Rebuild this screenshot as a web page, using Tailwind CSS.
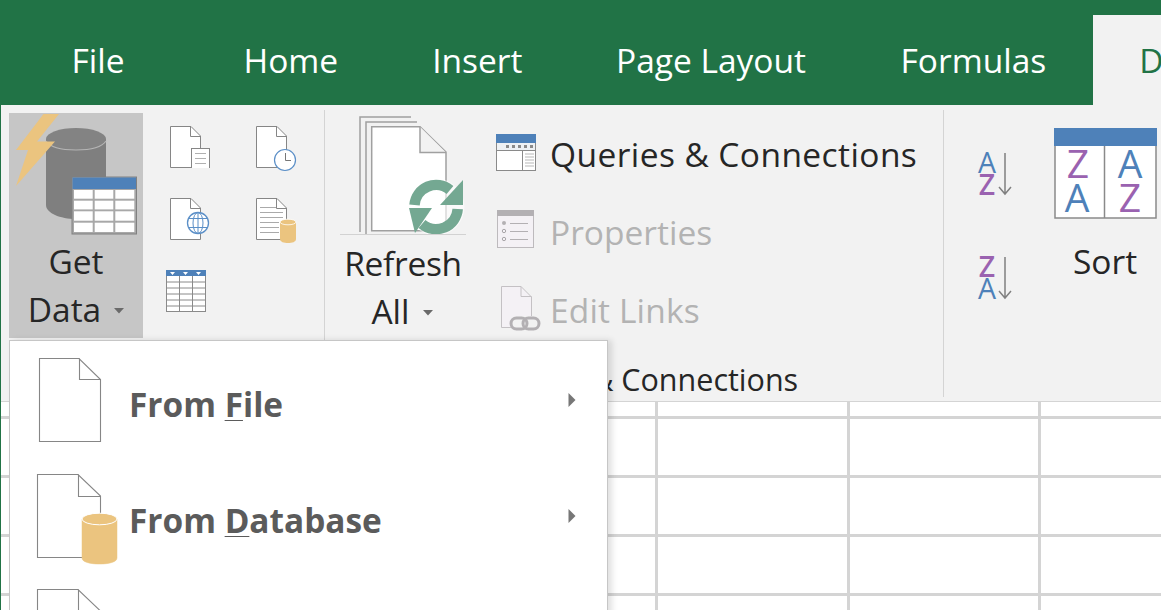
<!doctype html>
<html>
<head>
<meta charset="utf-8">
<script src="https://cdn.jsdelivr.net/npm/@tailwindcss/browser@4"></script>
</head>
<body class="m-0 bg-white">
<div class="relative h-[610px] w-[1161px] overflow-hidden border-l border-l-[#217346] bg-white font-['Open_Sans','Noto_Sans',sans-serif] text-[#262626]">

  <!-- tabs -->
  <div class="flex h-[105px] items-stretch whitespace-nowrap bg-[#217346] pt-[15px] text-[33.5px] text-white">
    <div class="flex w-[195.5px] shrink-0 items-center pl-[70.5px]">File</div>
    <div class="flex shrink-0 items-center px-[47px]">Home</div>
    <div class="flex shrink-0 items-center px-[47px]">Insert</div>
    <div class="flex shrink-0 items-center pl-[46.5px] pr-[47px]">Page Layout</div>
    <div class="flex shrink-0 items-center pl-[47.5px] pr-[47px]">Formulas</div>
    <div class="flex flex-1 items-center bg-[#f2f2f2] pl-[46px] text-[#217346]">Data</div>
  </div>

  <!-- ribbon -->
  <div class="flex h-[297px] border-b border-b-[#d4d4d4] bg-[#f2f2f2] py-[5px]">
    <!-- Get group -->
    <div class="flex h-[287px] w-[324px] border-r border-r-[#d4d4d4] pl-[8px]">
      <div class="mt-[3px] flex h-[225px] w-[134px] flex-col items-center bg-[#c6c6c6] text-[33.5px] leading-[48px]">
        <svg class="mb-[-1px] block shrink-0" width="134" height="125" viewBox="9 113 134 125">
          <path d="M46 139V205C46 213 60 219 76 219S106 213 106 205V139Z" fill="#7f7f7f"/>
          <ellipse cx="76" cy="139" rx="30" ry="11" fill="#838383"/>
          <path d="M46 141C50 147 62 150 76 150S102 147 106 141" fill="none" stroke="#b5b5b5" stroke-width="1.2"/>
          <path d="M43.500 114H59L37 141.500H55L16 186L28 150H16Z" fill="#ebc47f"/>
          <rect x="72" y="177" width="64.500" height="57" fill="#a8a8a8" stroke="#808080"/>
          <rect x="72.500" y="177.500" width="63.500" height="11.500" fill="#4e81b9"/>
          <g fill="#fff">
            <rect x="74" y="190" width="18.700" height="8.700"/><rect x="94.700" y="190" width="18.600" height="8.700"/><rect x="115.300" y="190" width="19" height="8.700"/>
            <rect x="74" y="200.700" width="18.700" height="8.700"/><rect x="94.700" y="200.700" width="18.600" height="8.700"/><rect x="115.300" y="200.700" width="19" height="8.700"/>
            <rect x="74" y="211.300" width="18.700" height="9.400"/><rect x="94.700" y="211.300" width="18.600" height="9.400"/><rect x="115.300" y="211.300" width="19" height="9.400"/>
            <rect x="74" y="222.700" width="18.700" height="9.300"/><rect x="94.700" y="222.700" width="18.600" height="9.300"/><rect x="115.300" y="222.700" width="19" height="9.300"/>
          </g>
        </svg>
        <div>Get</div>
        <div class="flex items-center">Data<svg class="ml-[13px] mt-[3px]" width="10" height="6" viewBox="0 0 10 6"><path d="M0 0H10L5 5.500Z" fill="#6a6a6a"/></svg></div>
      </div>
      <div class="ml-[23px] mt-[10px] grid h-[192px] w-[134px] grid-cols-[86px_48px] grid-rows-[72px_72px_48px]">
        <svg width="48" height="48" viewBox="166 120 48 48">
          <path d="M170.500 126.500H191L200.500 136V167.500H170.500Z" fill="#fff" stroke="#868686"/>
          <path d="M190.500 126.500V136.500H200.500" fill="none" stroke="#868686"/>
          <rect x="191.500" y="148.500" width="18" height="21" fill="#fff" stroke="#868686"/>
          <path d="M195 153.500H206M195 158.500H206M195 163.500H206" stroke="#b0b0b0"/>
        </svg>
        <svg width="48" height="52" viewBox="252 120 48 52">
          <path d="M256.500 126.500H277L286.500 136V167.500H256.500Z" fill="#fff" stroke="#868686"/>
          <path d="M276.500 126.500V136.500H286.500" fill="none" stroke="#868686"/>
          <circle cx="285" cy="160" r="10.500" fill="#fff" stroke="#5b8fc7" stroke-width="1.200"/>
          <path d="M285.500 153V160.500H291" fill="none" stroke="#777"/>
        </svg>
        <svg width="48" height="48" viewBox="166 192 48 48">
          <path d="M170.500 198.500H191L200.500 208V239.500H170.500Z" fill="#fff" stroke="#868686"/>
          <path d="M190.500 198.500V208.500H200.500" fill="none" stroke="#868686"/>
          <circle cx="198" cy="223" r="10.500" fill="#fff" stroke="#5b8fc7" stroke-width="1.300"/>
          <ellipse cx="198" cy="223" rx="5" ry="10.500" fill="none" stroke="#5b8fc7"/>
          <path d="M188 218.500H208M188 227.500H208M198 212.500V233.500" stroke="#5b8fc7"/>
        </svg>
        <svg width="48" height="52" viewBox="252 192 48 52">
          <path d="M256.500 198.500H277L286.500 208V239.500H256.500Z" fill="#fff" stroke="#868686"/>
          <path d="M276.500 198.500V208.500H286.500" fill="none" stroke="#868686"/>
          <path d="M260 207.500H276M260 212.500H283M260 217.500H283M260 222.500H279M260 227.500H279M260 232.500H279" stroke="#aaa"/>
          <path d="M280 222V239C280 242 284 243 288 243S296 242 296 239V222Z" fill="#ebc47f"/>
          <ellipse cx="288" cy="222" rx="8" ry="2.800" fill="#ebc47f" stroke="#fff" stroke-width=".8"/>
        </svg>
        <svg width="48" height="48" viewBox="166 264 48 48" class="col-span-2">
          <rect x="166.500" y="270.500" width="39" height="41" fill="#fff" stroke="#8a8a8a"/>
          <rect x="166" y="270" width="40" height="6" fill="#4e81b9"/>
          <path d="M170 272H175L172.500 275ZM183 272H188L185.500 275ZM196 272H201L198.500 275Z" fill="#fff"/>
          <path d="M179.500 276V312M192.500 276V312M167 282H205M167 288H205M167 294H205M167 300H205M167 306H205" stroke="#8a8a8a" fill="none"/>
        </svg>
      </div>
    </div>

    <!-- Queries group -->
    <div class="flex h-[287px] w-[619px] flex-col border-r border-r-[#d4d4d4]">
      <div class="flex h-[251px]">
        <div class="ml-[15px] flex w-[126px] flex-col items-center">
          <svg class="mb-[4px] block shrink-0" width="126" height="125" viewBox="340 110 126 125">
            <path d="M360 232V117H411M366 237V122H417" fill="none" stroke="#a0a0a0" stroke-width="1.500"/>
            <path d="M371.700 126.700H420L446 152V230.700H371.700Z" fill="#fff" stroke="#a0a0a0" stroke-width="1.500"/>
            <path d="M420 126.700V152.500H446" fill="#f2f2f2" stroke="#a0a0a0" stroke-width="1.500"/>
            <circle cx="436" cy="207" r="28.500" fill="#fff" opacity=".6"/>
            <g fill="none" stroke="#74a892" stroke-width="10.500">
              <path d="M414.500 205A21.700 21.700 0 0 1 450 190"/>
              <path d="M457.700 209A21.700 21.700 0 0 1 422 224"/>
            </g>
            <path d="M463 180V205H440Z" fill="#74a892"/>
            <path d="M409 208H432L415 233Z" fill="#74a892"/>
            <path d="M340 234.500H466" stroke="#d2d2d2"/>
          </svg>
          <div class="text-[33.5px] leading-[48px] tracking-[-0.3px]">Refresh</div>
          <div class="flex items-center text-[33.5px] leading-[48px]"><span class="ml-[-2px]">All</span><svg class="ml-[13px] mt-[3px]" width="10" height="6" viewBox="0 0 10 6"><path d="M0 0H10L5 5.500Z" fill="#6a6a6a"/></svg></div>
        </div>
        <div class="ml-[29px] mt-[3px] flex flex-col text-[33.5px]">
          <div class="flex h-[78px] items-center">
            <svg class="w-[55px] shrink-0" width="55" height="48" viewBox="495 128 55 48">
              <rect x="496.500" y="134.500" width="39" height="36" fill="#fff" stroke="#8a8a8a"/>
              <rect x="496" y="134" width="40" height="9" fill="#4e81b9"/>
              <rect x="497" y="143" width="38" height="7" fill="#eef1f4"/>
              <path d="M506 145h3v3h-3zM512 145h3v3h-3zM518 145h3v3h-3zM524 145h3v3h-3zM530 145h3v3h-3z" fill="#8a8a8a"/>
              <path d="M497 150.500H535M522.500 150.500V170" stroke="#8a8a8a" fill="none"/>
              <path d="M525 154H534M525 157H534M525 160H534M525 163H534M525 166H534" stroke="#a5a5a5" stroke-width=".8"/>
            </svg>
            <span class="mt-[5px] tracking-[0.42px]">Queries &amp; Connections</span>
          </div>
          <div class="flex h-[78px] items-center text-[#b3b3b3]">
            <svg class="w-[55px] shrink-0" width="55" height="48" viewBox="495 208 55 48">
              <rect x="497.500" y="212.500" width="36" height="37" fill="#f4f1f5" stroke="#bdbabd"/>
              <rect x="497" y="212" width="37" height="6" fill="#b3b0b3"/>
              <circle cx="504" cy="225" r="2" fill="#b3b0b3"/>
              <circle cx="504" cy="233" r="1.700" fill="none" stroke="#a9a6a9"/>
              <circle cx="504" cy="241" r="1.700" fill="none" stroke="#a9a6a9"/>
              <path d="M510 225.500H528M510 233.500H528M510 241.500H528" stroke="#b3b0b3"/>
            </svg>
            <span class="mt-[5px]">Properties</span>
          </div>
          <div class="flex h-[78px] items-center text-[#b3b3b3]">
            <svg class="w-[55px] shrink-0" width="55" height="48" viewBox="495 286 55 48">
              <path d="M501.500 288.500H521L531.500 299V329.500H501.500Z" fill="#f4f1f5" stroke="#c4c1c4"/>
              <path d="M521 288.500V298.500H531.500" fill="none" stroke="#c4c1c4"/>
              <rect x="510" y="318" width="30" height="15" rx="7" fill="#f2f2f2"/>
              <g fill="none" stroke="#b3b0b3" stroke-width="3">
                <rect x="511" y="320" width="16" height="11" rx="5.500"/>
                <rect x="523" y="320" width="16" height="11" rx="5.500"/>
              </g>
            </svg>
            <span class="mt-[5px] tracking-[0.15px]">Edit Links</span>
          </div>
        </div>
      </div>
      <div class="pl-[2px] pt-[2px] text-center text-[30.5px] leading-[35px]">Queries &amp; Connections</div>
    </div>

    <!-- Sort group -->
    <div class="flex h-[287px] flex-1">
      <div class="ml-[30px] mt-[41px] flex w-[48px] flex-col gap-[56px]">
        <svg width="48" height="48" viewBox="974 156 48 48" class="overflow-visible">
          <text x="987" y="178" text-anchor="middle" font-size="28.500" font-weight="500" fill="#4e81b9" font-family="Open Sans">A</text>
          <text x="987" y="200" text-anchor="middle" font-size="28.500" font-weight="600" fill="#9a62b0" font-family="Open Sans">Z</text>
          <path d="M1005 158V199M999 192L1005 199L1011 192" fill="none" stroke="#808080" stroke-width="1.500"/>
        </svg>
        <svg width="48" height="48" viewBox="974 260 48 48" class="overflow-visible">
          <text x="987" y="282" text-anchor="middle" font-size="28.500" font-weight="600" fill="#9a62b0" font-family="Open Sans">Z</text>
          <text x="987" y="304" text-anchor="middle" font-size="28.500" font-weight="500" fill="#4e81b9" font-family="Open Sans">A</text>
          <path d="M1005 262V303M999 296L1005 303L1011 296" fill="none" stroke="#808080" stroke-width="1.500"/>
        </svg>
      </div>
      <div class="ml-[30px] mt-[16px] flex w-[106px] flex-col items-center">
        <svg width="106" height="96" viewBox="1052 126 106 96" class="block shrink-0 overflow-visible">
          <rect x="1055" y="129" width="101" height="89" fill="#fff" stroke="#8a8a8a" stroke-width="1.500"/>
          <rect x="1054" y="128" width="103" height="18" fill="#4e81b9"/>
          <path d="M1104.500 146V218" stroke="#8a8a8a" stroke-width="1.500"/>
          <g font-family="Open Sans" font-size="39" text-anchor="middle" font-weight="500">
            <text x="1078" y="178" fill="#9a62b0">Z</text>
            <text x="1077" y="212" fill="#4e81b9">A</text>
            <text x="1130" y="178" fill="#4e81b9">A</text>
            <text x="1130" y="212" fill="#9a62b0">Z</text>
          </g>
        </svg>
        <div class="mt-[15px] text-[33.5px] leading-[48px]">Sort</div>
      </div>
    </div>
  </div>

  <!-- sheet grid -->
  <div class="grid grid-cols-[654px_192px_191px_1fr] grid-rows-[17px_59px_59px_59px_59px]">
    <div class="border-b-[3px] border-b-[#d4d4d4]"></div><div class="border-b-[3px] border-l-[3px] border-[#d4d4d4]"></div><div class="border-b-[3px] border-l-[3px] border-[#d4d4d4]"></div><div class="border-b-[3px] border-l-[3px] border-[#d4d4d4]"></div>
    <div class="border-b-[3px] border-b-[#d4d4d4]"></div><div class="border-b-[3px] border-l-[3px] border-[#d4d4d4]"></div><div class="border-b-[3px] border-l-[3px] border-[#d4d4d4]"></div><div class="border-b-[3px] border-l-[3px] border-[#d4d4d4]"></div>
    <div class="border-b-[3px] border-b-[#d4d4d4]"></div><div class="border-b-[3px] border-l-[3px] border-[#d4d4d4]"></div><div class="border-b-[3px] border-l-[3px] border-[#d4d4d4]"></div><div class="border-b-[3px] border-l-[3px] border-[#d4d4d4]"></div>
    <div class="border-b-[3px] border-b-[#d4d4d4]"></div><div class="border-b-[3px] border-l-[3px] border-[#d4d4d4]"></div><div class="border-b-[3px] border-l-[3px] border-[#d4d4d4]"></div><div class="border-b-[3px] border-l-[3px] border-[#d4d4d4]"></div>
    <div class="border-b-[3px] border-b-[#d4d4d4]"></div><div class="border-b-[3px] border-l-[3px] border-[#d4d4d4]"></div><div class="border-b-[3px] border-l-[3px] border-[#d4d4d4]"></div><div class="border-b-[3px] border-l-[3px] border-[#d4d4d4]"></div>
  </div>

  <!-- dropdown menu -->
  <div class="absolute left-[8px] top-[340px] h-[290px] w-[599px] border border-[#c6c6c6] bg-white shadow-[4px_0_6px_rgba(0,0,0,0.12)]">
    <div class="flex h-[116px] items-center text-[33.4px] font-bold text-[#5b5b5b]">
      <svg class="ml-[19px] mt-[2px] w-[100px] shrink-0" width="100" height="100" viewBox="29 350 100 100">
        <path d="M39.500 358.500H79L100.500 379.500V441.500H39.500Z" fill="#fff" stroke="#868686" stroke-width="1.100"/>
        <path d="M79.500 358.500V379.500H100.500" fill="none" stroke="#868686" stroke-width="1.100"/>
      </svg>
      <span class="mt-[11px]">From <span class="underline decoration-1 underline-offset-[3px]">F</span>ile</span>
      <svg class="ml-auto mr-[31px] mt-[1px]" width="8" height="14" viewBox="0 0 8 14"><path d="M0.500 0L7.500 7L0.500 14Z" fill="#777"/></svg>
    </div>
    <div class="flex h-[116px] items-center text-[33.4px] font-bold text-[#5b5b5b]">
      <svg class="ml-[19px] mt-[5px] w-[100px] shrink-0" width="100" height="100" viewBox="29 468 100 100">
        <path d="M37.500 474.500H78L100.500 496V557.500H37.500Z" fill="#fff" stroke="#868686" stroke-width="1.100"/>
        <path d="M78.500 474.500V496.500H100.500" fill="none" stroke="#868686" stroke-width="1.100"/>
        <path d="M82 519V558C82 562 90 564 99.500 564S117 562 117 558V519Z" fill="#ebc47f" stroke="#ebc47f" stroke-width=".5"/>
        <ellipse cx="99.500" cy="519" rx="17.500" ry="5.800" fill="#ebc47f" stroke="#fff" stroke-width="1"/>
      </svg>
      <span class="mt-[11px]">From <span class="underline decoration-1 underline-offset-[3px]">D</span>atabase</span>
      <svg class="ml-auto mr-[31px] mt-[1px]" width="8" height="14" viewBox="0 0 8 14"><path d="M0.500 0L7.500 7L0.500 14Z" fill="#777"/></svg>
    </div>
    <div class="flex h-[58px] items-start">
      <svg class="ml-[19px] mt-[8px] shrink-0" width="100" height="100" viewBox="29 582 100 100">
        <path d="M37.500 590.500H78L100.500 612V673.500H37.500Z" fill="#fff" stroke="#868686" stroke-width="1.100"/>
        <path d="M78.500 590.500V612.500H100.500" fill="none" stroke="#868686" stroke-width="1.100"/>
      </svg>
    </div>
  </div>
</div>
</body>
</html>
